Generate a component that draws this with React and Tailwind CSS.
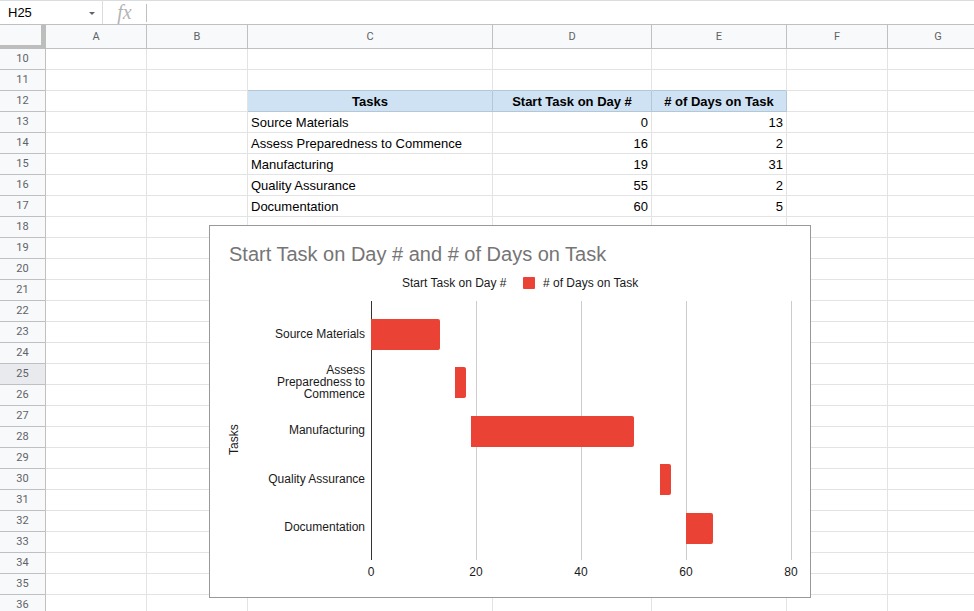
const columns = [
  { name: "A", width: "w-[101px]" },
  { name: "B", width: "w-[101px]" },
  { name: "C", width: "w-[245px]" },
  { name: "D", width: "w-[159px]" },
  { name: "E", width: "w-[135px]" },
  { name: "F", width: "w-[101px]" },
  { name: "G", width: "w-[101px]" },
];

const FIRST_ROW = 10;
const LAST_ROW = 36;
const HEADER_ROW = 12;
const ACTIVE_ROW = 25;

const headings = { C: "Tasks", D: "Start Task on Day #", E: "# of Days on Task" };

const tasks = [
  { name: "Source Materials", start: 0, days: 13, lines: ["Source Materials"] },
  {
    name: "Assess Preparedness to Commence",
    start: 16,
    days: 2,
    lines: ["Assess", "Preparedness to", "Commence"],
  },
  { name: "Manufacturing", start: 19, days: 31, lines: ["Manufacturing"] },
  { name: "Quality Assurance", start: 55, days: 2, lines: ["Quality Assurance"] },
  { name: "Documentation", start: 60, days: 5, lines: ["Documentation"] },
];

const rows = Array.from({ length: LAST_ROW - FIRST_ROW + 1 }, (_, i) => FIRST_ROW + i);

function cellValue(row, col) {
  if (row === HEADER_ROW) return headings[col] ?? "";
  const task = tasks[row - HEADER_ROW - 1];
  if (!task) return "";
  if (col === "C") return task.name;
  if (col === "D") return task.start;
  if (col === "E") return task.days;
  return "";
}

function cellClass(row, col) {
  const inTable = col in headings;
  if (inTable && row === HEADER_ROW) return "bg-[#cfe2f3] border-[#b5c6d5] text-center font-bold";
  if (inTable && row === HEADER_ROW - 1) return "border-r-[#e2e3e3] border-b-[#b5c6d5]";
  if (col === "D" || col === "E") return "border-[#e2e3e3] text-right";
  return "border-[#e2e3e3]";
}

function FormulaBar() {
  return (
    <div className="flex h-[25px] items-center border-t border-b border-t-[#dadce0] border-b-[#c0c0c0] bg-white">
      <div className="flex h-full w-[103px] items-center border-r border-[#dadce0] pl-2">
        <input
          aria-label="Name box"
          defaultValue="H25"
          className="w-20 bg-transparent text-[13px] text-black outline-none"
        />
        <button aria-label="Named ranges" className="flex h-4 w-2 items-center justify-center pt-0.5">
          <svg viewBox="0 0 6 3" className="h-[3px] w-[6px] shrink-0" fill="#5f6368">
            <path d="M0 0h6L3 3z" />
          </svg>
        </button>
      </div>
      <label
        htmlFor="formula"
        className="w-[43px] pb-0.5 text-center font-['Liberation_Serif',serif] text-xl leading-5 text-[#b4b4b4] italic"
      >
        fx
      </label>
      <input
        id="formula"
        className="h-[18px] min-w-0 flex-1 border-l border-[#c0c0c0] bg-transparent px-2 text-[13px] outline-none"
      />
    </div>
  );
}

function Grid() {
  return (
    <table className="w-max min-w-full border-separate border-spacing-0">
      <thead>
        <tr className="h-6 font-[Roboto,sans-serif] text-[11px] leading-4 text-[#5f6368]">
          <td className="w-[46px] min-w-[46px] border-r-5 border-b-4 border-[#bdbdbd] bg-[#f8f9fa] p-0" />
          {columns.map((col) => (
            <th
              key={col.name}
              scope="col"
              className={`${col.width} border-r border-b border-[#c0c0c0] bg-[#f8f9fa] p-0 font-normal`}
            >
              {col.name}
            </th>
          ))}
        </tr>
      </thead>
      <tbody>
        {rows.map((row) => (
          <tr key={row} className="h-[21px]">
            <th
              scope="row"
              className={`border-r border-b border-[#c0c0c0] p-0 font-[Roboto,sans-serif] text-[11px] leading-4 font-normal text-[#5f6368] ${
                row === ACTIVE_ROW ? "bg-[#e8eaed]" : "bg-[#f8f9fa]"
              }`}
            >
              {row}
            </th>
            {columns.map((col) => (
              <td
                key={col.name}
                className={`border-r border-b px-[3px] pt-0.5 pb-0 text-[13px] leading-4 whitespace-nowrap text-black ${cellClass(row, col.name)}`}
              >
                {cellValue(row, col.name)}
              </td>
            ))}
          </tr>
        ))}
      </tbody>
    </table>
  );
}

const PLOT = { left: 161, top: 75, bottom: 334, width: 420, maxDay: 80 };
const BAR_HEIGHT = 31;
const LINE_HEIGHT = 12;

const dayX = (day) => PLOT.left + (day / PLOT.maxDay) * PLOT.width;

// square on the left, slightly rounded on the right
function barPath(x, y, w, h) {
  return `M${x} ${y}h${w - 2}q2 0 2 2v${h - 4}q0 2 -2 2h${2 - w}z`;
}

function GanttChart() {
  return (
    <svg
      viewBox="0 0 600 371"
      className="block h-[371px] w-[600px] font-['Liberation_Sans',Arial,sans-serif] text-xs"
      role="img"
      aria-label="Start Task on Day # and # of Days on Task"
    >
      <text x="19" y="35" fill="#757575" className="text-xl">
        Start Task on Day # and # of Days on Task
      </text>

      <g fill="#1a1a1a">
        <text x="192" y="61">Start Task on Day #</text>
        <rect x="313" y="51" width="12" height="12" rx="1" fill="#ea4335" />
        <text x="333" y="61"># of Days on Task</text>
      </g>

      {[0, 20, 40, 60, 80].map((day) => (
        <g key={day}>
          <rect
            x={dayX(day)}
            y={PLOT.top}
            width="1"
            height={PLOT.bottom - PLOT.top}
            fill={day === 0 ? "#333333" : "#cccccc"}
          />
          <text x={dayX(day)} y="350" textAnchor="middle" fill="#1a1a1a">
            {day}
          </text>
        </g>
      ))}

      {tasks.map((task, i) => {
        const y = Math.round(93 + i * 48.4);
        const x = Math.round(dayX(task.start));
        const end = Math.ceil(dayX(task.start + task.days));
        const firstLine = Math.round(112 + i * 48.2) - ((task.lines.length - 1) * LINE_HEIGHT) / 2;
        return (
          <g key={task.name}>
            <path d={barPath(x, y, end - x, BAR_HEIGHT)} fill="#ea4335" />
            {task.lines.map((line, n) => (
              <text key={line} x="155" y={firstLine + n * LINE_HEIGHT} textAnchor="end" fill="#1a1a1a">
                {line}
              </text>
            ))}
          </g>
        );
      })}

      <text transform="translate(28 229) rotate(-90)" fill="#1a1a1a">
        Tasks
      </text>
    </svg>
  );
}

export default function App() {
  return (
    <div className="flex h-screen flex-col overflow-hidden bg-white font-['Liberation_Sans',Arial,sans-serif]">
      <FormulaBar />
      <main className="relative min-h-0 flex-1 overflow-hidden">
        <Grid />
        <div className="absolute top-[200px] left-[209px] border border-[#999999] bg-white">
          <GanttChart />
        </div>
      </main>
    </div>
  );
}
